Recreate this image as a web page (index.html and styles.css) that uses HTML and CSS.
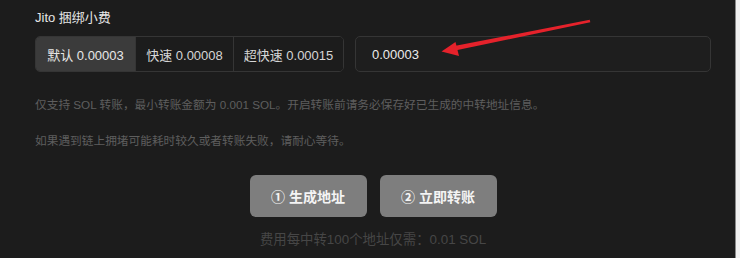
FILE: index.html
```html
<!DOCTYPE html>
<html lang="zh-CN">

<head>
  <meta charset="UTF-8">
  <meta name="viewport" content="width=device-width, initial-scale=1.0">
  <title>Jito 捆绑小费</title>
  <link rel="stylesheet" href="styles.css">
</head>

<body>
  <div class="page">
    <div class="panel">
      <div class="label">Jito 捆绑小费</div>
      <div class="fee-row">
        <div class="segments">
          <button class="segment active">默认 0.00003</button>
          <button class="segment">快速 0.00008</button>
          <button class="segment">超快速 0.00015</button>
        </div>
        <input type="text" class="fee-input" value="0.00003">
      </div>

      <p class="hint first">仅支持 SOL 转账，最小转账金额为 0.001 SOL。开启转账前请务必保存好已生成的中转地址信息。</p>
      <p class="hint">如果遇到链上拥堵可能耗时较久或者转账失败，请耐心等待。</p>

      <div class="actions">
        <button class="action">① 生成地址</button>
        <button class="action">② 立即转账</button>
      </div>
      <div class="cost">费用每中转100个地址仅需：0.01 SOL</div>
    </div>

    <!-- annotation arrow drawn over the screenshot -->
    <svg class="arrow" width="740" height="80" viewBox="0 0 740 80">
      <polygon points="590.3,22.2 589.7,19.8 455.6,45.8 456.4,50.2" fill="#e5222b" />
      <polygon points="441.5,51.5 455.5,42 459,56" fill="#e5222b" />
    </svg>
  </div>
</body>

</html>
```

FILE: styles.css
```css
html {
  background-color: #f0f0f0;
}

body {
  margin: 0;
  width: 735px;
  height: 258px;
  background-color: #1c1c1c;
  border-right: 1px solid #8a8a8a;
  font-family: "Liberation Sans", "Noto Sans CJK SC", sans-serif;
  color: #e2e2e2;
  overflow: hidden;
}

.page {
  position: relative;
  height: 258px;
}

.panel {
  margin-left: 35px;
  width: 676px;
  padding-top: 10px;
}

.label {
  font-size: 13px;
  line-height: 16px;
  color: #e6e6e6;
  margin-bottom: 10px;
}

.fee-row {
  display: flex;
  gap: 11px;
  height: 36px;
}

.segments {
  display: flex;
  width: 309px;
  box-sizing: border-box;
  border: 1px solid #353535;
  border-radius: 5px;
  overflow: hidden;
}

.segment {
  height: 100%;
  border: none;
  border-left: 1px solid #353535;
  background: #1c1c1c;
  color: #d6d6d6;
  font-family: inherit;
  font-size: 13px;
  padding: 0;
  cursor: pointer;
}

.segment:nth-child(1) {
  width: 99px;
  border-left: none;
}

.segment:nth-child(2) {
  width: 98px;
}

.segment:nth-child(3) {
  flex: 1;
}

.segment.active {
  background: #3b3b3b;
  color: #e8e8e8;
}

.fee-input {
  flex: 1;
  box-sizing: border-box;
  height: 36px;
  border: 1px solid #353535;
  border-radius: 5px;
  background: #1e1e1e;
  color: #ececec;
  font-family: inherit;
  font-size: 13px;
  padding: 0 16px;
  outline: none;
}

.hint {
  margin: 18px 0 0;
  font-size: 11.7px;
  line-height: 18px;
  color: #5e5e5e;
}

.hint.first {
  margin-top: 24px;
}

.actions {
  display: flex;
  justify-content: center;
  gap: 13px;
  margin-top: 25px;
}

.action {
  width: 117px;
  height: 42px;
  border: none;
  border-radius: 6px;
  background: #7e7e7e;
  color: #f4f4f4;
  font-family: inherit;
  font-size: 14px;
  font-weight: bold;
  cursor: pointer;
}

.cost {
  margin-top: 14px;
  text-align: center;
  font-size: 13.4px;
  line-height: 18px;
  color: #464646;
}

.arrow {
  position: absolute;
  left: 0;
  top: 0;
  pointer-events: none;
}
```
